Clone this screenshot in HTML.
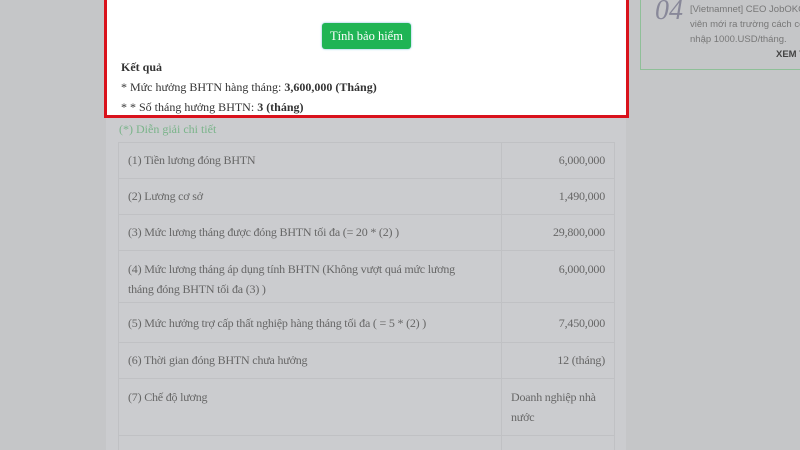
<!DOCTYPE html>
<html><head><meta charset="utf-8"><style>
*{margin:0;padding:0;box-sizing:border-box}
html,body{width:800px;height:450px;overflow:hidden}
body{background:#c5c6c8;font-family:"Liberation Serif","DejaVu Serif",serif;position:relative}
.panel{position:absolute;left:106px;top:0;width:520px;height:450px;background:#cbcccf}
.red{position:absolute;left:104px;top:-3px;width:525px;height:121px;border:3px solid #d9121c;background:#fff}
.btn{position:absolute;left:215px;top:23px;width:89px;height:26px;background:#1fb455;border-radius:3px;color:#fff;font-size:12.5px;text-align:center;line-height:26px;box-shadow:0 0 2px #7bd;}
.res{position:absolute;left:14px;font-size:12px;color:#333}
.diag{position:absolute;left:119px;top:122px;color:#7ab48a;font-size:12px}
table{position:absolute;left:118px;top:142px;width:497px;border-collapse:collapse;font-size:12px;letter-spacing:-0.2px;color:#666}
td{border:1px solid #c0c1c4;padding:0 9px;vertical-align:top}
td.r{text-align:right;width:113px}
.card{position:absolute;left:640px;top:-2px;width:170px;height:72px;border:1px solid #8fbf98;font-family:"Liberation Sans",sans-serif;color:#777;font-size:9.5px}
</style></head><body>
<div class="panel"></div>
<div class="red">
<div class="btn">Tính bảo hiểm</div>
<div class="res" style="top:60px;font-weight:bold">Kết quả</div>
<div class="res" style="top:80px">* Mức hưởng BHTN hàng tháng: <b>3,600,000 (Tháng)</b></div>
<div class="res" style="top:100px">* * Số tháng hưởng BHTN: <b>3 (tháng)</b></div>
</div>
<div class="diag">(*) Diễn giải chi tiết</div>
<table>
<tr style="height:36px"><td style="padding-top:10px">(1) Tiền lương đóng BHTN</td><td class="r" style="padding-top:10px">6,000,000</td></tr>
<tr style="height:36px"><td style="padding-top:10px">(2) Lương cơ sở</td><td class="r" style="padding-top:10px">1,490,000</td></tr>
<tr style="height:36px"><td style="padding-top:10px">(3) Mức lương tháng được đóng BHTN tối đa (= 20 * (2) )</td><td class="r" style="padding-top:10px">29,800,000</td></tr>
<tr style="height:52px"><td style="padding-top:8px;line-height:20px">(4) Mức lương tháng áp dụng tính BHTN (Không vượt quá mức lương<br>tháng đóng BHTN tối đa (3) )</td><td class="r" style="padding-top:8px;line-height:20px">6,000,000</td></tr>
<tr style="height:40px"><td style="padding-top:13px">(5) Mức hưởng trợ cấp thất nghiệp hàng tháng tối đa ( = 5 * (2) )</td><td class="r" style="padding-top:13px">7,450,000</td></tr>
<tr style="height:36px"><td style="padding-top:10px">(6) Thời gian đóng BHTN chưa hưởng</td><td class="r" style="padding-top:10px">12 (tháng)</td></tr>
<tr style="height:57px"><td style="padding-top:8px;line-height:20px">(7) Chế độ lương</td><td class="r" style="padding-top:8px;line-height:20px;text-align:left">Doanh nghiệp nhà nước</td></tr>
<tr style="height:30px"><td></td><td class="r"></td></tr>
</table>
<div class="card">
<div style="position:absolute;left:14px;top:-4px;font-family:'Liberation Serif',serif;font-style:italic;font-size:28px;color:#889">04</div>
<div style="position:absolute;left:49px;top:3px;line-height:15px">[Vietnamnet] CEO JobOKO<br>viên mới ra trường cách co<br>nhập 1000.USD/tháng.</div>
<div style="position:absolute;left:135px;top:50px;font-weight:bold;color:#444">XEM T</div>
</div>
</body></html>
